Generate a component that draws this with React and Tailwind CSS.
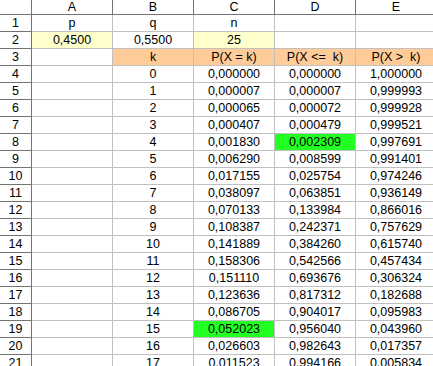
import React from 'react';

const pk = ['0,000000', '0,000007', '0,000065', '0,000407', '0,001830', '0,006290', '0,017155', '0,038097', '0,070133', '0,108387', '0,141889', '0,158306', '0,151110', '0,123636', '0,086705', '0,052023', '0,026603', '0,011523'];
const cum = ['0,000000', '0,000007', '0,000072', '0,000479', '0,002309', '0,008599', '0,025754', '0,063851', '0,133984', '0,242371', '0,384260', '0,542566', '0,693676', '0,817312', '0,904017', '0,956040', '0,982643', '0,994166'];
const tail = ['1,000000', '0,999993', '0,999928', '0,999521', '0,997691', '0,991401', '0,974246', '0,936149', '0,866016', '0,757629', '0,615740', '0,457434', '0,306324', '0,182688', '0,095983', '0,043960', '0,017357', '0,005834'];

const Head = ({ children }) => (
    <div className="h-[15px] flex items-center justify-center border-r border-b border-[#737373] bg-white leading-none">{children}</div>
);

const RowHead = ({ children }) => (
    <div className="h-[17px] flex items-center justify-center border-r border-b border-[#737373] bg-white leading-none">{children}</div>
);

const Cell = ({ children, bg = 'bg-white' }) => (
    <div className={`h-[17px] flex items-center justify-center border-r border-b border-[#c0c0c0] leading-none whitespace-pre ${bg}`}>{children}</div>
);

const App = () => {
    const rows = [];
    rows.push(['p', 'q', 'n', '', ''].map(v => ({ v })));
    rows.push([
        { v: '0,4500', bg: 'bg-[#ffffcc]' },
        { v: '0,5500' },
        { v: '25', bg: 'bg-[#ffffcc]' },
        { v: '' },
        { v: '' },
    ]);
    rows.push([
        { v: '' },
        { v: 'k', bg: 'bg-[#ffcc99]' },
        { v: 'P(X = k)', bg: 'bg-[#ffcc99]' },
        { v: 'P(X <=  k)', bg: 'bg-[#ffcc99]' },
        { v: 'P(X >  k)', bg: 'bg-[#ffcc99]' },
    ]);
    pk.forEach((p, k) => {
        rows.push([
            { v: '' },
            { v: String(k) },
            { v: p, bg: k === 15 ? 'bg-[#22ff22]' : undefined },
            { v: cum[k], bg: k === 4 ? 'bg-[#22ff22]' : undefined },
            { v: tail[k] },
        ]);
    });

    return (
        <div className="w-[433px] h-[366px] overflow-hidden bg-white text-black text-[12.5px]" style={{ fontFamily: '"Liberation Sans", Arial, sans-serif' }}>
            <div className="grid grid-cols-[32px_81px_81px_81px_81px_81px] w-[437px]">
                <Head />
                {['A', 'B', 'C', 'D', 'E'].map(c => <Head key={c}>{c}</Head>)}
                {rows.map((r, i) => (
                    <React.Fragment key={i}>
                        <RowHead>{i + 1}</RowHead>
                        {r.map((c, j) => <Cell key={j} bg={c.bg}>{c.v}</Cell>)}
                    </React.Fragment>
                ))}
            </div>
        </div>
    );
};

export default App;
